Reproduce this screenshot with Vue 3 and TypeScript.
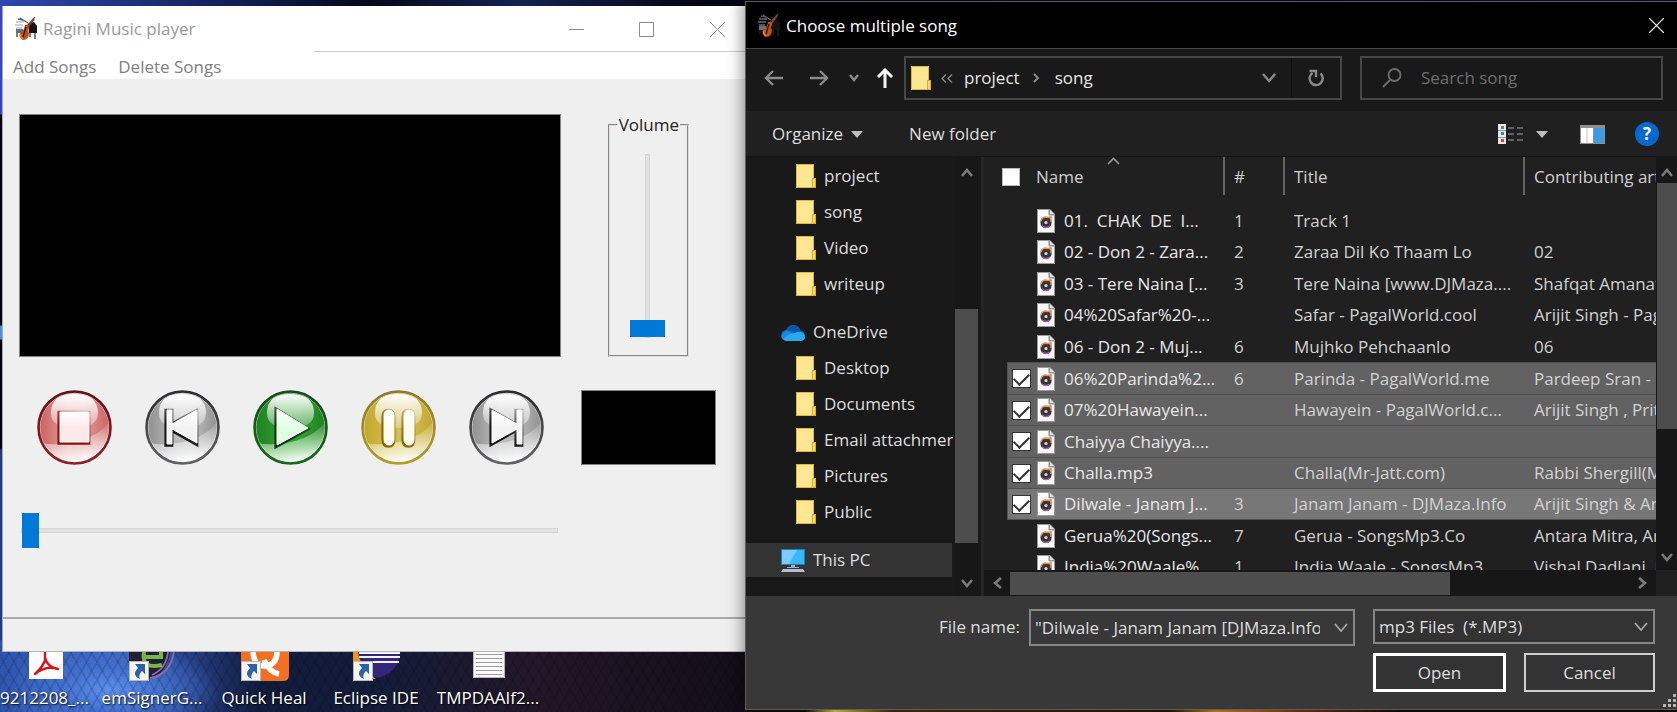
<script setup lang="ts">
import { ref } from 'vue'

interface Song {
  name: string
  track: string
  title: string
  artist: string
  checked: boolean
}

interface Tone {
  id: string
  label: string
  rimTop: string
  rimBottom: string
  edge: string
  mid: string
  low: string
  fill: string
  shade: string
}

const tones: Tone[] = [
  { id: 'stop', label: 'Stop', rimTop: '#5e1416', rimBottom: '#8e2225', edge: '#c9605f', mid: '#e09a99', low: '#fbeaea', fill: '#ffe8e9', shade: '#8f1013' },
  { id: 'prev', label: 'Previous', rimTop: '#2b2c2e', rimBottom: '#606264', edge: '#8e8e8e', mid: '#bcbcbc', low: '#f4f4f4', fill: '#f3f3f3', shade: '#161616' },
  { id: 'play', label: 'Play', rimTop: '#1d4a20', rimBottom: '#14691a', edge: '#1c7f1f', mid: '#33a033', low: '#d6f5d6', fill: '#e0ffe2', shade: '#0d3510' },
  { id: 'pause', label: 'Pause', rimTop: '#8c7a35', rimBottom: '#b79a22', edge: '#bfa52c', mid: '#d3bf50', low: '#f8f2cf', fill: '#fffdea', shade: '#84680c' },
  { id: 'next', label: 'Next', rimTop: '#2b2c2e', rimBottom: '#606264', edge: '#8e8e8e', mid: '#bcbcbc', low: '#f4f4f4', fill: '#f3f3f3', shade: '#161616' },
]

const glyphs: Record<string, string> = {
  stop: 'M23 22H52V52H23Z',
  prev: 'M22 20H27V34L52 20V53L27 39V54H22Z',
  play: 'M24 19L55 38L24 55Z',
  pause: 'M23 26Q23 20 28 20Q33 20 33 26V49Q33 55 28 55Q23 55 23 49ZM43 26Q43 20 48 20Q53 20 53 26V49Q53 55 48 55Q43 55 43 49Z',
  next: 'M23 20L48 34V20H53V54H48V39L23 53Z',
}

const folderTop = ['project', 'song', 'Video', 'writeup']
const folderDrive = ['Desktop', 'Documents', 'Email attachments', 'Pictures', 'Public']

const songs = ref<Song[]>([
  { name: '01.\u00a0 CHAK\u00a0 DE\u00a0 I...', track: '1', title: 'Track 1', artist: '', checked: false },
  { name: '02 - Don 2 - Zara...', track: '2', title: 'Zaraa Dil Ko Thaam Lo', artist: '02', checked: false },
  { name: '03 - Tere Naina [...', track: '3', title: 'Tere Naina [www.DJMaza....', artist: 'Shafqat Amanat Ali', checked: false },
  { name: '04%20Safar%20-...', track: '', title: 'Safar - PagalWorld.cool', artist: 'Arijit Singh - PagalWorld', checked: false },
  { name: '06 - Don 2 - Muj...', track: '6', title: 'Mujhko Pehchaanlo', artist: '06', checked: false },
  { name: '06%20Parinda%2...', track: '6', title: 'Parinda - PagalWorld.me', artist: 'Pardeep Sran - PagalWorld', checked: true },
  { name: '07%20Hawayein...', track: '', title: 'Hawayein - PagalWorld.c...', artist: 'Arijit Singh , Pritam', checked: true },
  { name: 'Chaiyya Chaiyya....', track: '', title: '', artist: '', checked: true },
  { name: 'Challa.mp3', track: '', title: 'Challa(Mr-Jatt.com)', artist: 'Rabbi Shergill(Mr-Jatt.com)', checked: true },
  { name: 'Dilwale - Janam J...', track: '3', title: 'Janam Janam - DJMaza.Info', artist: 'Arijit Singh & Antara Mitra', checked: true },
  { name: 'Gerua%20(Songs...', track: '7', title: 'Gerua - SongsMp3.Co', artist: 'Antara Mitra, Arijit Singh', checked: false },
  { name: 'India%20Waale%', track: '1', title: 'India Waale - SongsMp3', artist: 'Vishal Dadlani, KK', checked: false },
])

const volume = ref(0)
const position = ref(0)
const allChecked = ref(false)
const fileName = ref('"Dilwale - Janam Janam [DJMaza.Info].mp3"')
const search = ref('')

const shortcuts = [
  { id: 'pdf', label: '9212208_...' },
  { id: 'signer', label: 'emSignerG...' },
  { id: 'heal', label: 'Quick Heal' },
  { id: 'eclipse', label: 'Eclipse IDE' },
  { id: 'text', label: 'TMPDAAIf2...' },
]
</script>

<template>
  <div class="desktop">
    <svg class="defs" aria-hidden="true">
      <defs>
        <symbol id="band" viewBox="0 0 22 24">
          <path d="M1 5H9M0 8H8M1 11H7" stroke="#9aa4ad" stroke-width="1" />
          <path d="M5 1L13 6M20 0L12 9M3 2L8 3" stroke="#5b5f63" stroke-width="1.3" />
          <path d="M13 7L19 5L22 9V16H14Z" fill="#151515" />
          <path d="M1 12H8V16H1Z" fill="#5d7182" />
          <path d="M2 16V20M20 15V22M15 16V20" stroke="#27272b" stroke-width="1.2" />
          <path d="M19 2L12 11" stroke="#8a3a14" stroke-width="2" />
          <path d="M10 8Q14 7 14 11Q12 13 14 16Q14 23 8 23Q3 21 5 16Q9 14 10 8Z" fill="#c4500f" />
          <path d="M11 10L8 20" stroke="#2f1206" stroke-width="1.4" />
          <path d="M6 17Q5 20 8 22" stroke="#ef9440" stroke-width="1.2" fill="none" />
        </symbol>
        <symbol id="folder" viewBox="0 0 20 24">
          <path d="M0 0H18V17H20V24H0Z" fill="#e3b73e" />
          <path d="M1 1H17V23H1Z" fill="#ffe692" />
          <path d="M16 14H20V24H16Z" fill="#d9ab2f" />
          <path d="M17 15H19V23H17Z" fill="#fbd862" />
        </symbol>
        <symbol id="track" viewBox="0 0 18 24">
          <path d="M0 0H13L18 5V24H0Z" fill="#9b9b9b" />
          <path d="M1 1H12V6H17V23H1Z" fill="#fafafa" />
          <path d="M13 1V5H17Z" fill="#e4e4e4" />
          <path d="M12 1V6H17" fill="none" stroke="#8c8c8c" />
          <circle cx="9" cy="13.5" r="5.6" fill="#3b3336" />
          <path d="M4 12Q5 7 11 8.5L14 8V13" fill="none" stroke="#e88b52" stroke-width="1.6" />
          <path d="M5 17Q9 20 13 17" fill="none" stroke="#a35fc0" stroke-width="1.3" />
          <circle cx="9" cy="13.5" r="1.6" fill="#d8d8d8" />
        </symbol>
        <symbol id="arrow-badge" viewBox="0 0 20 20">
          <path d="M0 0H20V20H0Z" fill="#b9b9b9" />
          <path d="M1 1H19V19H1Z" fill="#f4f4f4" />
          <path d="M6 3H16V13L13 10Q9 13 11 18Q2 14 9 7Z" fill="#2f62a5" />
        </symbol>
      </defs>
    </svg>

    <section class="player">
      <header class="player-title">
        <svg class="band"><use href="#band" /></svg>
        <h1>Ragini Music player</h1>
        <div class="window-buttons">
          <button type="button" aria-label="Minimize"><svg viewBox="0 0 15 15"><path d="M0 7.5H15" /></svg></button>
          <button type="button" aria-label="Maximize"><svg viewBox="0 0 15 15"><path d="M.5 .5H14.5V14.5H.5Z" /></svg></button>
          <button type="button" aria-label="Close"><svg viewBox="0 0 15 15"><path d="M0 0L15 15M15 0L0 15" /></svg></button>
        </div>
      </header>
      <nav class="player-menu">
        <button type="button">Add Songs</button>
        <button type="button">Delete Songs</button>
      </nav>
      <div class="player-body">
        <div class="screen-row">
          <div class="screen"></div>
          <fieldset class="volume">
            <legend>Volume</legend>
            <input v-model="volume" type="range" min="0" max="100" aria-label="Volume" />
          </fieldset>
        </div>
        <div class="control-row">
          <div class="controls">
            <button v-for="t in tones" :key="t.id" type="button" class="round" :aria-label="t.label">
              <svg viewBox="0 0 75 75">
                <defs>
                  <linearGradient :id="'rim-' + t.id" x1="0" y1="0" x2="0" y2="1">
                    <stop offset="0" :stop-color="t.rimTop" /><stop offset="1" :stop-color="t.rimBottom" />
                  </linearGradient>
                  <linearGradient :id="'face-' + t.id" x1="0" y1="0" x2="1" y2="0">
                    <stop offset="0" :stop-color="t.edge" /><stop offset=".4" :stop-color="t.mid" />
                    <stop offset=".65" :stop-color="t.mid" /><stop offset="1" :stop-color="t.edge" />
                  </linearGradient>
                  <linearGradient :id="'low-' + t.id" x1=".4" y1="0" x2=".6" y2="1">
                    <stop offset=".1" :stop-color="t.low" stop-opacity=".1" /><stop offset="1" stop-color="#fff" />
                  </linearGradient>
                  <linearGradient :id="'gloss-' + t.id" x1="0" y1="0" x2="0" y2="1">
                    <stop offset="0" stop-color="#fff" /><stop offset="1" stop-color="#fff" stop-opacity=".25" />
                  </linearGradient>
                  <linearGradient :id="'glyph-' + t.id" x1="0" y1="0" x2="0" y2="1">
                    <stop offset="0" stop-color="#fff" stop-opacity=".9" /><stop offset=".5" :stop-color="t.fill" />
                    <stop offset="1" :stop-color="t.fill" />
                  </linearGradient>
                  <linearGradient :id="'line-' + t.id" x1="1" y1="0" x2=".3" y2="1">
                    <stop offset="0" :stop-color="t.shade" stop-opacity=".3" /><stop offset=".75" :stop-color="t.shade" />
                  </linearGradient>
                </defs>
                <circle cx="37.5" cy="37.5" r="36" :fill="`url(#face-${t.id})`" />
                <path d="M4 53Q20 56 38 52Q62 46 71 33Q75 57 55 68Q37 77 18 67Q7 60 4 53Z" :fill="`url(#low-${t.id})`" />
                <circle cx="37.5" cy="37.5" r="34.5" fill="none" stroke="#fff" stroke-opacity=".5" stroke-width="1" />
                <path d="M14 23Q14 4 37 4Q61 4 61 23Q61 38 37 38Q14 38 14 23Z" :fill="`url(#gloss-${t.id})`" />
                <circle cx="37.5" cy="37.5" r="36" fill="none" :stroke="`url(#rim-${t.id})`" stroke-width="2.6" />
                <path :d="glyphs[t.id]" fill="none" :stroke="`url(#line-${t.id})`" stroke-width="4" transform="translate(-.6 .8)" />
                <path :d="glyphs[t.id]" fill="#fff" />
                <path :d="glyphs[t.id]" :fill="`url(#glyph-${t.id})`" stroke="#fff" stroke-width="1" />
              </svg>
            </button>
          </div>
          <div class="clock"></div>
        </div>
        <input v-model="position" class="seek" type="range" min="0" max="100" aria-label="Position" />
      </div>
      <footer class="player-status"></footer>
    </section>

    <ul class="shortcuts">
      <li v-for="s in shortcuts" :key="s.id">
        <svg viewBox="0 0 52 34">
          <template v-if="s.id === 'pdf'">
            <path d="M10 0H44V27H10Z" fill="#fff" />
            <path d="M26 0V7Q30 16 39 17Q27 13 16 22Q24 15 27 6" fill="none" stroke="#d5151a" stroke-width="2.4" stroke-linejoin="round" />
          </template>
          <template v-else-if="s.id === 'signer'">
            <path d="M3 0V26L22 27Q40 24 44 0Z" fill="#231d35" />
            <path d="M48 0Q44 23 24 26M42 0Q40 17 26 23" fill="none" stroke="#8e6ab0" stroke-width="1.8" />
            <path d="M18 5H37M18 0Q15 18 36 13M35 6V0" fill="none" stroke="#75b843" stroke-width="4" />
            <use href="#arrow-badge" x="3" y="9" width="20" height="20" />
          </template>
          <template v-else-if="s.id === 'heal'">
            <path d="M3 0H51V23Q51 29 45 29H3Z" fill="#f36f21" />
            <path d="M15 0Q16 15 28 14Q39 12 39 0M26 8Q31 20 41 22" fill="none" stroke="#fff" stroke-width="5.5" />
            <use href="#arrow-badge" x="3" y="9" width="20" height="20" />
          </template>
          <template v-else-if="s.id === 'eclipse'">
            <path d="M3 0H12L16 20L26 27H18L3 15Z" fill="#f59215" />
            <path d="M8 0H50Q49 20 28 26Q12 22 8 0Z" fill="#34277a" />
            <path d="M9 1H50M9 5H50M9 10H49" stroke="#f4f3f8" stroke-width="2.2" />
            <use href="#arrow-badge" x="3" y="9" width="20" height="20" />
          </template>
          <template v-else>
            <path d="M11 0H43V26H11Z" fill="#b8b8b8" />
            <path d="M12 0H42V25H12Z" fill="#fafafa" />
            <path d="M14 2.5H40M14 6.5H40M14 10.5H40M14 14.5H40M14 18.5H40M14 22.5H40" stroke="#9c9c9c" />
          </template>
        </svg>
        <span>{{ s.label }}</span>
      </li>
    </ul>

    <section class="dialog">
      <header class="dialog-title">
        <svg class="band"><use href="#band" /></svg>
        <h2>Choose multiple song</h2>
        <button type="button" aria-label="Close dialog"><svg viewBox="0 0 15 15"><path d="M0 0L15 15M15 0L0 15" /></svg></button>
      </header>

      <div class="location">
        <button type="button" class="wide" aria-label="Back"><svg width="20" height="18" viewBox="0 0 20 18"><path d="M19 9H2M9 2L2 9L9 16" /></svg></button>
        <button type="button" class="wide" aria-label="Forward"><svg width="20" height="18" viewBox="0 0 20 18"><path d="M1 9H18M11 2L18 9L11 16" /></svg></button>
        <button type="button" class="recent" aria-label="Recent locations"><svg width="10" height="8" viewBox="0 0 10 8"><path d="M1 1L5 6L9 1" /></svg></button>
        <button type="button" class="up" aria-label="Up"><svg width="18" height="20" viewBox="0 0 18 20"><path d="M9 20V3M2 9L9 2L16 9" /></svg></button>
        <div class="address">
          <svg class="folder"><use href="#folder" /></svg>
          <svg class="crumb-more" viewBox="0 0 12 9"><path d="M5 .5L1 4.5L5 8.5M11 .5L7 4.5L11 8.5" /></svg>
          <a href="#">project</a>
          <svg class="crumb-next" viewBox="0 0 7 10"><path d="M1 1L5 5L1 9" /></svg>
          <a href="#">song</a>
          <button type="button" class="history" aria-label="Previous locations"><svg width="14" height="10" viewBox="0 0 14 10"><path d="M1 1L7 8L13 1" /></svg></button>
          <button type="button" class="refresh" aria-label="Refresh"><svg width="18" height="18" viewBox="0 0 18 18"><path d="M13.5 4.5A6.6 6.6 0 1 1 5.5 4M2.5 2H9V8" /></svg></button>
        </div>
        <label class="search">
          <svg width="20" height="20" viewBox="0 0 20 20"><circle cx="12.5" cy="7" r="6" /><path d="M8 12L1 19" /></svg>
          <input v-model="search" type="text" placeholder="Search song" aria-label="Search song" />
        </label>
      </div>

      <div class="toolbar">
        <button type="button" class="organize">Organize <i class="caret"></i></button>
        <button type="button">New folder</button>
        <div class="view-tools">
          <button type="button" aria-label="Change view">
            <svg width="26" height="20" viewBox="0 0 26 20">
              <path d="M0 0H8V20H0Z" fill="#e9e9e9" />
              <path d="M0 6.5H8M0 13.5H8" stroke="#999" />
              <path d="M3 2H6V5H3Z" fill="#5a8a6a" /><path d="M3 8H6V11H3Z" fill="#2f7fe0" /><path d="M3 15H6V18H3Z" fill="#e0402f" />
              <path d="M10 4H16M19 4H25M10 10H16M19 10H25M10 16H16M19 16H25" stroke="#777" stroke-width="1.5" />
            </svg>
          </button>
          <button type="button" class="view-more" aria-label="More views"><i class="caret"></i></button>
          <button type="button" class="pane" aria-label="Preview pane">
            <svg width="25" height="19" viewBox="0 0 25 19">
              <path d="M0 0H25V19H0Z" fill="#8f8f8f" /><path d="M1 3H13V18H1Z" fill="#fff" /><path d="M7 3V18" stroke="#c4c4c4" />
              <path d="M14 3H24V18H14Z" fill="#3f9ae5" />
            </svg>
          </button>
          <button type="button" class="help" aria-label="Help">?</button>
        </div>
      </div>

      <div class="browser">
        <aside class="tree">
          <ul>
            <li v-for="f in folderTop" :key="f" class="leaf"><svg class="folder"><use href="#folder" /></svg>{{ f }}</li>
            <li class="root">
              <svg class="root-icon" viewBox="0 0 24 17">
                <path d="M1 13Q-1 7 5 6Q9 -1 16 2Q19 4 19 6Q25 8 23 13Z" fill="#0f6cc4" />
                <path d="M5 6Q9 5 19 12Q21 6 19 6Q19 4 16 2Q9 -1 5 6Z" fill="#0a57a8" />
                <path d="M3 16Q-1 14 1 10Q4 6 9 8L21 16Z" fill="#148bdc" />
                <path d="M2 15Q8 9 14 9Q20 6 23 10Q26 16 20 17H5Q3 17 2 15Z" fill="#29a9ee" />
              </svg>
              OneDrive
            </li>
            <li v-for="f in folderDrive" :key="f" class="leaf"><svg class="folder"><use href="#folder" /></svg>{{ f }}</li>
            <li class="root pc">
              <svg class="root-icon tall" viewBox="0 0 24 23">
                <path d="M0 0H24V16H0Z" fill="#1d7fb8" /><path d="M1 1H23V15H1Z" fill="#38b6ff" />
                <path d="M1 1H16L8 15H1Z" fill="#7accff" />
                <path d="M10 16H14V18H18V19H6V18H10Z" fill="#9fb0bd" /><path d="M2 20H22L24 23H0Z" fill="#b5c0cc" />
              </svg>
              This PC
            </li>
          </ul>
          <div class="vscroll">
            <svg class="tip" viewBox="0 0 12 9"><path d="M1 8L6 2L11 8" /></svg>
            <div class="thumb"></div>
            <svg class="tip" viewBox="0 0 12 9"><path d="M1 1L6 7L11 1" /></svg>
          </div>
        </aside>

        <div class="files">
          <div class="files-main">
            <div class="list">
              <table>
                <colgroup><col class="c-name" /><col class="c-num" /><col class="c-title" /><col class="c-artist" /></colgroup>
                <thead>
                  <tr>
                    <th class="name-head">
                      <input v-model="allChecked" type="checkbox" aria-label="Select all" />
                      <span>Name</span>
                      <svg class="sort" viewBox="0 0 13 8"><path d="M1 7L6.5 1.5L12 7" /></svg>
                    </th>
                    <th>#</th>
                    <th>Title</th>
                    <th>Contributing artists</th>
                  </tr>
                </thead>
                <tbody>
                  <tr v-for="(s, i) in songs" :key="s.name" :class="{ picked: s.checked, current: i === 9 }">
                    <td class="name-cell">
                      <div>
                        <input v-model="s.checked" type="checkbox" :aria-label="s.name" />
                        <svg class="track"><use href="#track" /></svg>
                        <span>{{ s.name }}</span>
                      </div>
                    </td>
                    <td>{{ s.track }}</td>
                    <td>{{ s.title }}</td>
                    <td>{{ s.artist }}</td>
                  </tr>
                </tbody>
              </table>
            </div>
            <div class="vscroll slim">
              <svg class="tip" viewBox="0 0 12 9"><path d="M1 8L6 2L11 8" /></svg>
              <div class="thumb"></div>
              <svg class="tip" viewBox="0 0 12 9"><path d="M1 1L6 7L11 1" /></svg>
            </div>
          </div>
          <div class="hscroll">
            <svg class="side" viewBox="0 0 9 12"><path d="M8 1L2 6L8 11" /></svg>
            <div class="rail"><div class="thumb"></div></div>
            <svg class="side" viewBox="0 0 9 12"><path d="M1 1L7 6L1 11" /></svg>
          </div>
        </div>
      </div>

      <footer class="choose">
        <label for="file-name">File name:</label>
        <div class="combo">
          <input id="file-name" v-model="fileName" type="text" />
          <button type="button" aria-label="Recent names"><svg viewBox="0 0 14 9"><path d="M1 1L7 8L13 1" /></svg></button>
        </div>
        <div class="kind">
          <select aria-label="File type"><option>mp3 Files&nbsp; (*.MP3)</option></select>
          <svg viewBox="0 0 14 9"><path d="M1 1L7 8L13 1" /></svg>
        </div>
        <div class="answers">
          <button type="button" class="open">Open</button>
          <button type="button">Cancel</button>
        </div>
        <svg class="grip" viewBox="0 0 14 14"><path d="M10 0H13V3H10ZM5 5H8V8H5ZM10 5H13V8H10ZM0 10H3V13H0ZM5 10H8V13H5ZM10 10H13V13H10Z" fill="#b5b5b5" /></svg>
      </footer>
    </section>
  </div>
</template>

<style>
body { margin: 0; overflow: hidden; background: #05060f; }
</style>

<style scoped>
* { box-sizing: border-box; }
.desktop {
  position: relative;
  display: grid;
  grid-template-columns: 745px minmax(0, 1fr);
  grid-template-rows: minmax(0, 1fr);
  height: 100vh;
  overflow: hidden;
  font: 17px/24px "Open Sans", "Noto Sans", sans-serif;
  background:
    linear-gradient(90deg, transparent 0 745px, #160d05 745px 805px, #e0cf50 835px, #4a3000 890px, #2a1806 1170px, #d28c24 1215px, #7c3812 1300px, #110b0a 1400px) 0 100% / 100% 2px no-repeat,
    linear-gradient(90deg, #2f48b0, #0d1a45 16%, #05081c 22%, #142250 31%, #050414 42%, #0b0b28 100%) 0 0 / 100% 6px no-repeat,
    linear-gradient(#3346c8 0 114px, #02030c 115px 325px, #4a8fd8 326px 339px, #02030c 340px 448px, #203a86 450px 640px, transparent 640px) 0 0 / 3px 100% no-repeat,
    repeating-linear-gradient(60deg, rgba(0, 0, 20, .12) 0 2px, transparent 2px 9px),
    repeating-linear-gradient(120deg, rgba(0, 0, 20, .12) 0 2px, transparent 2px 9px),
    radial-gradient(ellipse at 110px 690px, #5c90ec 0, #4270cd 50px, transparent 110px),
    linear-gradient(90deg, #2e55ae, #3c66c0 110px, #263f85 190px, #111c3c 260px, #151d3a 380px, #231727 540px, #130e17 745px);
}
.defs { position: absolute; width: 0; height: 0; }
button, input, select { font: inherit; color: inherit; margin: 0; padding: 0; border: 0; background: none; border-radius: 0; }
button { display: inline-flex; align-items: center; justify-content: center; }
h1, h2 { margin: 0; font-size: 17px; line-height: 24px; font-weight: 400; }
ul { list-style: none; margin: 0; padding: 0; }
svg { display: block; flex: none; }
.band { width: 22px; height: 24px; }

/* Player */
.player { display: flex; flex-direction: column; grid-column: 1; grid-row: 1; align-self: start; margin: 6px 0 0 2px; height: 646px; background: #efefef; border-left: 1px solid #aaa; }
.player-title { display: flex; align-items: center; gap: 6px; height: 46px; padding: 0 0 0 12px; color: #999; background: linear-gradient(#ccc, #ccc) 311px 100% / 100% 1px no-repeat #fff; }
.window-buttons { display: flex; margin-left: auto; }
.window-buttons button { width: 70px; height: 40px; }
.window-buttons button:last-child { width: 64px; padding-left: 8px; }
.window-buttons svg { width: 15px; height: 15px; }
.window-buttons path { fill: none; stroke: #8c8c8c; }
.player-menu { display: flex; gap: 22px; height: 27px; padding: 3px 10px 0; background: #fff; color: #808080; }
.player-menu button { height: 24px; }
.player-body { flex: 1; padding: 35px 0 0; }
.screen-row { display: flex; gap: 47px; height: 243px; padding: 0 56px 0 16px; }
.screen { flex: 1; background: #000; border: 1px solid #858585; }
.volume { display: flex; justify-content: center; width: 81px; min-width: 0; margin: 0; padding: 0 2px 0 0; border: 2px groove #dcdcdc; color: #222; }
.volume legend { margin-left: auto; margin-right: 5px; padding: 0 1px 0 2px; line-height: 22px; height: 22px; }
.volume input { appearance: none; writing-mode: vertical-lr; direction: rtl; width: 35px; height: 184px; margin-top: 18px; }
.volume input::-webkit-slider-runnable-track { width: 5px; height: 184px; background: #e2e2e2; border: 1px solid #d4d4d4; }
.volume input::-webkit-slider-thumb { appearance: none; width: 35px; height: 17px; margin-left: -16px; background: #0078d7; border: 0; }
.control-row { display: flex; gap: 37px; height: 75px; margin-top: 33px; padding: 0 29px 0 34px; }
.controls { display: flex; gap: 33px; }
.round, .round svg { width: 75px; height: 75px; }
.clock { flex: 1; background: #000; border: 1px solid #858585; }
.seek { display: block; appearance: none; width: calc(100% - 205px); height: 35px; margin: 48px 187px 0 18px; }
.seek::-webkit-slider-runnable-track { height: 5px; background: #e2e2e2; border: 1px solid #d4d4d4; }
.seek::-webkit-slider-thumb { appearance: none; width: 17px; height: 35px; margin-top: -16px; background: #0078d7; border: 0; }
.player-status { height: 35px; border-top: 2px solid #a8a8a8; border-bottom: 1px solid #b5b5b5; }

/* Desktop shortcuts */
.shortcuts { grid-column: 1; grid-row: 1; align-self: end; justify-self: start; display: flex; height: 60px; margin-left: -7px; }
.shortcuts li { flex: none; display: flex; flex-direction: column; align-items: center; width: 112px; color: #fff; text-shadow: 1px 1px 2px #000; }
.shortcuts li:first-child { width: 103px; }
.shortcuts svg { width: 52px; height: 34px; }
.shortcuts span { white-space: nowrap; }

/* Dialog */
.dialog { position: relative; grid-column: 2; grid-row: 1; display: flex; flex-direction: column; min-width: 0; margin: 1px 0 2px; border: solid #5c5c5c; border-width: 1px 0 1px 1px; background: #191919; color: #dedede; box-shadow: -3px 0 14px rgba(0, 0, 0, .4); }
.dialog-title { flex: none; display: flex; align-items: center; gap: 6px; height: 47px; padding: 1px 13px 0 12px; background: #000; border-bottom: 1px solid #454545; color: #fff; }
.dialog-title button { margin-left: auto; }
.dialog-title button svg { width: 15px; height: 15px; }
.dialog-title button path { stroke: #fff; stroke-width: 1.2px; }
.location { flex: none; display: flex; height: 62px; padding: 7px 14px 11px 5px; }
.location svg path, .location svg circle { fill: none; stroke: #8a8a8a; stroke-width: 2.4px; }
.wide { width: 45px; }
.recent { width: 26px; }
.up { width: 37px; padding-right: 2px; }
.location .up path { stroke: #f4f4f4; stroke-width: 3px; }
.address { flex: 429 1 0; display: flex; align-items: center; min-width: 0; padding-left: 5px; border: 2px solid #474747; font-weight: 500; color: #e8e8e8; }
.address a { color: inherit; text-decoration: none; }
.folder { width: 20px; height: 24px; }
.crumb-more { width: 12px; height: 9px; margin: 0 11px 0 10px; }
.location .crumb-more path { stroke-width: 1.4px; }
.crumb-next { width: 7px; height: 10px; margin: 0 15px 0 13px; }
.location .crumb-next path { stroke-width: 2px; }
.history { width: 46px; height: 40px; margin-left: auto; border-right: 1px solid #101010; }
.refresh { width: 48px; height: 40px; }
.search { flex: 279 1 0; display: flex; align-items: center; gap: 19px; min-width: 0; margin-left: 18px; padding-left: 20px; border: 2px solid #474747; }
.location .search svg path, .location .search svg circle { stroke: #6e6e6e; stroke-width: 1.8px; }
.search input { flex: 1; min-width: 0; outline: 0; }
.search input::placeholder { color: #6e6e6e; opacity: 1; }
.toolbar { flex: none; display: flex; align-items: center; gap: 46px; height: 46px; padding: 1px 18px 0 26px; background: #202020; border-bottom: 1px solid #171717; }
.organize { gap: 8px; }
.caret { border: solid transparent; border-width: 7px 6px 0; border-top-color: #bfbfbf; }
.view-tools { display: flex; align-items: center; margin-left: auto; }
.view-more { margin: 0 32px 0 12px; }
.help { width: 24px; height: 24px; margin-left: 30px; border-radius: 50%; background: #0368cf; color: #fff; font-weight: 700; }
.browser { flex: 1; display: flex; min-height: 0; }
.tree { display: flex; flex: none; width: 238px; padding-right: 3px; border-right: 3px solid #252525; }
.tree ul { flex: 1; min-width: 0; overflow: hidden; margin-right: 2px; padding-top: 1px; }
.tree li { display: flex; align-items: center; height: 36px; gap: 8px; white-space: nowrap; }
.leaf { padding-left: 50px; }
.root { padding-left: 35px; }
.leaf + .root { margin: 12px 0 0; }
.tree .pc { height: 34px; margin-top: 13px; margin-right: 1px; background: #333; }
.root-icon { width: 24px; height: 17px; }
.root-icon.tall { height: 23px; }
.vscroll { display: flex; flex-direction: column; align-items: center; width: 23px; flex: none; padding: 11px 0 8px; background: #171717; }
.tip { width: 12px; height: 9px; }
.tip path, .side path { fill: none; stroke: #7a7a7a; stroke-width: 2.6px; }
.vscroll .thumb { width: 23px; background: #4d4d4d; flex: none; height: 234px; margin: 132px 0 auto; }
.slim { width: 21px; padding-bottom: 8px; }
.slim .thumb { width: 20px; height: 246px; margin-top: 6px; }
.files { flex: 1; display: flex; flex-direction: column; min-width: 0; background: #202020; }
.files-main { flex: 1; display: flex; min-height: 0; }
.list { flex: 1; min-width: 0; overflow: hidden; padding-left: 23px; }
table { width: 100%; border-collapse: separate; border-spacing: 0; table-layout: fixed; }
.c-name { width: 218px; }
.c-num { width: 60px; }
.c-title { width: 240px; }
th { height: 48px; padding: 0 0 8px 9px; font-weight: 400; text-align: left; white-space: nowrap; overflow: hidden; color: #d0d0d0; background: linear-gradient(#646464, #646464) 100% 0 / 2px 38px no-repeat; }
th:last-child { background: none; }
.name-head { position: relative; overflow: visible; padding-left: 29px; }
.name-head input { position: absolute; left: -5px; top: 11px; width: 18px; height: 18px; appearance: none; background: #fff; border: 1px solid #bbb; }
.sort { position: absolute; left: 100px; top: 0; width: 13px; height: 8px; }
.sort path { fill: none; stroke: #9a9a9a; stroke-width: 1.6px; }
td { height: 31px; padding: 0 0 0 9px; white-space: nowrap; overflow: hidden; color: #d2d2d2; line-height: 24px; }
tr:nth-child(even) td { height: 32px; }
.name-cell { padding-left: 5px; color: #e8e8e8; }
.name-cell div { display: flex; align-items: center; }
.name-cell input { appearance: none; display: flex; justify-content: center; width: 19px; height: 19px; margin-right: 6px; visibility: hidden; border: 1px solid #333; background: #fff; }
.name-cell input:checked { visibility: visible; }
.name-cell input:checked::before { content: ""; width: 13px; height: 7px; margin-top: 3px; border: solid #333; border-width: 0 0 2px 2px; transform: rotate(-45deg); }
.track { width: 18px; height: 24px; margin-right: 9px; }
.picked td { background: #626262; border-top: 1px solid #505050; }
.picked td:first-child { border-left: 1px solid #505050; padding-left: 4px; }
.current td { background: #777; border-bottom: 1px solid #505050; }
.hscroll { flex: none; display: flex; align-items: center; gap: 8px; height: 26px; margin-right: 21px; padding: 0 9px; background: #171717; }
.side { width: 9px; height: 12px; }
.rail { flex: 1; height: 23px; }
.rail .thumb { width: 71%; height: 23px; background: #4d4d4d; }
.choose { position: relative; flex: none; display: grid; grid-template-columns: 274fr 335fr 282fr; column-gap: 9px; row-gap: 7px; align-content: start; height: 113px; padding: 13px 22px 0 0; background: #383838; }
.choose > label { text-align: right; line-height: 36px; height: 37px; }
.combo { display: flex; align-items: center; height: 37px; padding-left: 4px; margin-right: 9px; border: 2px solid #868686; min-width: 0; }
.combo input { flex: 1; min-width: 0; outline: 0; }
.combo button { justify-content: flex-end; width: 33px; padding-right: 5px; }
.combo svg, .kind svg { width: 14px; height: 9px; }
.choose svg:not(.grip) path { fill: none; stroke: #a8a8a8; stroke-width: 1.8px; }
.kind { position: relative; height: 35px; }
.kind select { width: 100%; height: 35px; padding-left: 4px; appearance: none; border: 2px solid #868686; background: #333; }
.kind svg { position: absolute; right: 7px; top: 13px; pointer-events: none; }
.answers { grid-column: 3; display: flex; gap: 18px; }
.answers button { flex: 1; height: 39px; border: 2px solid #cfcfcf; background: #333; }
.answers .open { border-width: 3px; border-color: #fff; }
.grip { position: absolute; right: 0; bottom: 1px; width: 14px; height: 14px; }
</style>
